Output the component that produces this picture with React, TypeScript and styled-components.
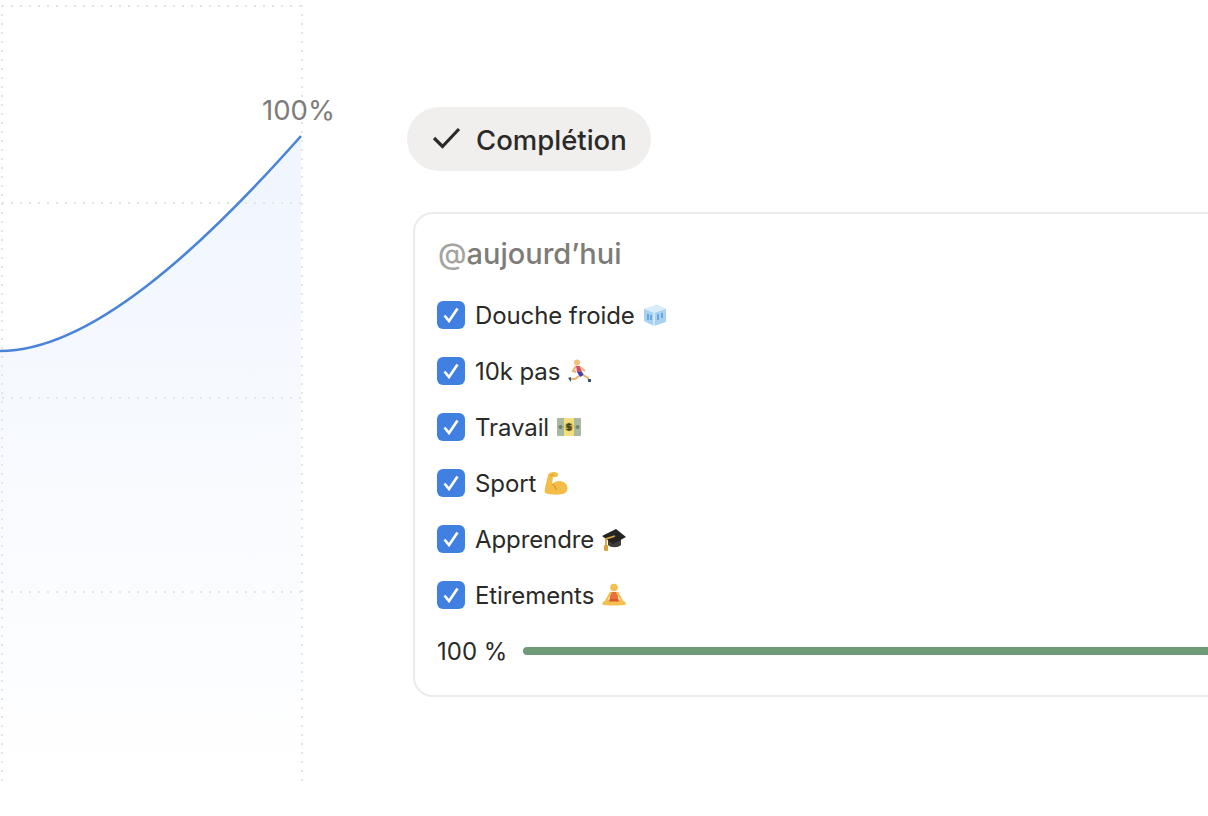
import styled, { createGlobalStyle } from 'styled-components';

const GlobalStyle = createGlobalStyle`
  html, body {
    margin: 0;
    height: 816px;
    overflow: hidden;
    background: #fff;
  }
  body {
    font-family: Inter, "Liberation Sans", sans-serif;
    color: #2a2a28;
  }
`;

const Page = styled.main`
  display: flex;
  align-items: flex-start;
  width: 1208px;
  height: 816px;
  overflow: hidden;
`;

const ChartSvg = styled.svg`
  flex: none;
  width: 407px;
  height: 816px;

  text {
    font-family: Inter, "Liberation Sans", sans-serif;
    font-size: 27.5px;
    fill: #7d7c78;
  }
`;

const Side = styled.section`
  flex: none;
  width: 801px;
  padding-top: 107px;
`;

const Pill = styled.div`
  display: inline-flex;
  align-items: center;
  gap: 14px;
  height: 64px;
  box-sizing: border-box;
  padding: 2px 24px 0 25px;
  border-radius: 32px;
  background: #f0efed;
  font-size: 27.5px;
  font-weight: 500;

  svg {
    display: block;
    margin-top: -4px;
  }
`;

const Card = styled.div`
  box-sizing: border-box;
  width: 900px;
  height: 485px;
  margin: 41px 0 0 6px;
  padding: 21px 22px 0;
  border: 2px solid #ebebe9;
  border-radius: 20px;
`;

const CardTitle = styled.h2`
  margin: 0 0 14px 1px;
  height: 38px;
  font-size: 29px;
  line-height: 38px;
  font-weight: 500;
  color: #7d7c78;

  span {
    color: #a5a4a0;
  }
`;

const Task = styled.div`
  display: flex;
  align-items: center;
  gap: 10px;
  height: 56px;
  font-size: 24px;
  letter-spacing: -0.1px;
`;

const Box = styled.span`
  flex: none;
  display: flex;
  align-items: center;
  justify-content: center;
  width: 28px;
  height: 28px;
  border-radius: 6px;
  background: #3f80e0;
`;

const Emoji = styled.svg`
  flex: none;
  width: 24px;
  height: 24px;
  margin-left: -2px;
`;

const Progress = styled.div`
  display: flex;
  align-items: center;
  gap: 16px;
  height: 56px;
  font-size: 24px;
`;

const Bar = styled.div`
  flex: 1;
  height: 8px;
  border-radius: 4px;
  background: #6f9a78;
`;

const Ice = () => (
  <Emoji viewBox="0 0 24 24">
    <path d="M1 6l13-4 9 4v13l-12 4-10-5z" fill="#a9d2f2" />
    <path d="M1 6l10 4 12-4-9-4z" fill="#d9edfa" />
    <path d="M11 10v13" stroke="#e4f2fc" strokeWidth="1.4" />
    <path d="M5 11v6M8 12v5M15 11v6M19 10v5" stroke="#5f9fd8" strokeWidth="1.7" />
  </Emoji>
);

const Runner = () => (
  <Emoji viewBox="0 0 24 24">
    <circle cx="9" cy="3.500" r="3" fill="#f2c078" />
    <path d="M8 7l-3 5 3 1" fill="none" stroke="#eab36e" strokeWidth="2" />
    <path d="M8 7h4l2 6H9z" fill="#d9466e" />
    <path d="M12 8l5 4" stroke="#eab36e" strokeWidth="2" />
    <path d="M9 13h5l2 3-4 2z" fill="#4c3fa8" />
    <path d="M11 17l-4 3-5 0" fill="none" stroke="#eab36e" strokeWidth="2" />
    <path d="M15 16l5 3 1 3" fill="none" stroke="#eab36e" strokeWidth="2" />
    <path d="M0 19l3-1 0 5zM20 20h3v3h-3z" fill="#34557a" />
  </Emoji>
);

const Money = () => (
  <Emoji viewBox="0 0 24 24">
    <rect x="0" y="3" width="24" height="18" rx="1" fill="#a9b8a0" />
    <rect x="7" y="3" width="10" height="18" fill="#f5de7c" />
    <circle cx="12" cy="12" r="4.500" fill="#d6c052" />
    <path d="M14.500 9.500h-4.500v2.500h4v2.500H9.500M12 8v8" fill="none" stroke="#3f3e20" strokeWidth="1.300" />
    <circle cx="3.500" cy="12" r="2" fill="#6f8468" />
    <circle cx="20.500" cy="12" r="2" fill="#6f8468" />
  </Emoji>
);

const Muscle = () => (
  <Emoji viewBox="0 0 24 24">
    <path d="M4 4c1-3 7-4 9-2 2 1 1 4-1 4l-3 0-1 7c4-4 11-4 14 0 3 4 1 9-3 10-6 1-12 1-18-1-1-4 2-12 3-18z" fill="#f3bd48" />
    <path d="M8 13c2 1 4 3 4 6" fill="none" stroke="#d9992c" strokeWidth="1.200" />
    <path d="M6 5c1-1 3-1 4-1" fill="none" stroke="#d9992c" strokeWidth="1" />
  </Emoji>
);

const Cap = () => (
  <Emoji viewBox="0 0 24 24">
    <path d="M6 11v7c3 3 10 3 13 0v-7z" fill="#3c3c3c" />
    <path d="M0 9l14-7 10 8-13 7z" fill="#232323" />
    <path d="M13 9l-9 3v8" fill="none" stroke="#d8a23c" strokeWidth="1.800" />
    <rect x="2" y="18" width="4" height="6" rx="1" fill="#d8a23c" />
  </Emoji>
);

const Lotus = () => (
  <Emoji viewBox="0 0 24 24">
    <circle cx="12" cy="4.500" r="3.800" fill="#f3bf4f" />
    <path d="M8.500 9h7l1 8h-9z" fill="#e8703a" />
    <path d="M9 9l-5 9M15 9l5 9" stroke="#f3bf4f" strokeWidth="2.200" fill="none" />
    <path d="M0 21c0-3 6-5 12-5s12 2 12 5c0 2-24 2-24 0z" fill="#f3bf4f" />
    <path d="M8 16h8l1 2.500H7z" fill="#d9572c" />
  </Emoji>
);

const tasks = [
  { label: 'Douche froide', icon: <Ice /> },
  { label: '10k pas', icon: <Runner /> },
  { label: 'Travail', icon: <Money /> },
  { label: 'Sport', icon: <Muscle /> },
  { label: 'Apprendre', icon: <Cap /> },
  { label: 'Etirements', icon: <Lotus /> },
];

const curve = 'M0 351C90 351 200 250 301 136';

export default function App() {
  return (
    <Page>
      <GlobalStyle />
      <ChartSvg viewBox="0 0 407 816">
        <defs>
          <linearGradient id="area" x1="0" y1="136" x2="0" y2="782" gradientUnits="userSpaceOnUse">
            <stop offset="0" stopColor="#f0f5fe" />
            <stop offset="1" stopColor="#ffffff" />
          </linearGradient>
        </defs>
        <path d={`${curve}V782H0Z`} fill="url(#area)" />
        <g stroke="#e4e4e2" strokeWidth="2" strokeDasharray="2 7">
          <path d="M2 5V782M302 5V782" />
          <path d="M2 6H302M2 203H302M2 398H302M2 592H302" />
        </g>
        <path d={curve} fill="none" stroke="#4a84d8" strokeWidth="2.600" />
        <text x="262" y="120">100%</text>
      </ChartSvg>
      <Side>
        <Pill>
          <svg width="30" height="24" viewBox="0 0 30 24" fill="none" stroke="#2a2a28" strokeWidth="3.200">
            <path d="M2 12l8.500 8.500L27 3" />
          </svg>
          Complétion
        </Pill>
        <Card>
          <CardTitle><span>@</span>aujourd’hui</CardTitle>
          {tasks.map((task) => (
            <Task key={task.label}>
              <Box>
                <svg width="20" height="20" viewBox="0 0 20 20" fill="none" stroke="#fff" strokeWidth="2.600">
                  <path d="M3.500 10.500l4.500 5.500L16.500 3.500" />
                </svg>
              </Box>
              {task.label}
              {task.icon}
            </Task>
          ))}
          <Progress>
            100 %
            <Bar />
          </Progress>
        </Card>
      </Side>
    </Page>
  );
}
